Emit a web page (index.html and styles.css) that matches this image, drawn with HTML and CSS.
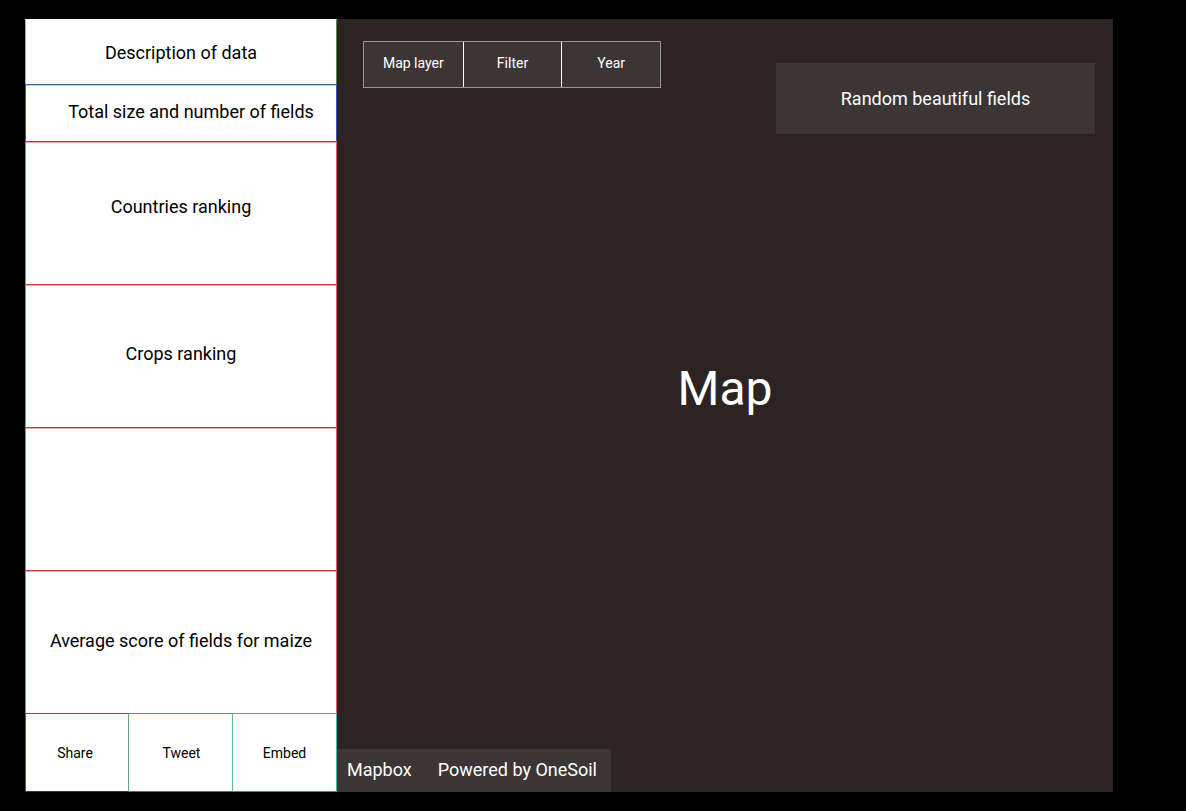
FILE: index.html
```html
<!DOCTYPE html>
<html lang="en">
<head>
<meta charset="utf-8">
<meta name="viewport" content="width=device-width, initial-scale=1">
<title>Map layout</title>
<link rel="stylesheet" href="styles.css">
</head>
<body>
<div class="layout">
  <aside class="sidebar">
    <section class="panel panel-description">Description of data</section>
    <section class="panel panel-totals">Total size and number of fields</section>
    <section class="panel panel-ranking panel-countries">Countries ranking</section>
    <section class="panel panel-ranking">Crops ranking</section>
    <section class="panel panel-ranking"></section>
    <section class="panel panel-ranking panel-score">Average score of fields for maize</section>
    <div class="actions">
      <button class="action action-share" type="button">Share</button>
      <button class="action action-tweet" type="button">Tweet</button>
      <button class="action action-embed" type="button">Embed</button>
    </div>
  </aside>
  <main class="map">
    <h1 class="map-title">Map</h1>
    <div class="map-top">
      <div class="tools">
        <button class="tool" type="button">Map layer</button>
        <button class="tool" type="button">Filter</button>
        <button class="tool" type="button">Year</button>
      </div>
      <button class="random" type="button">Random beautiful fields</button>
    </div>
    <footer class="credits">
      <a class="credit" href="#">Mapbox</a>
      <a class="credit" href="#">Powered by OneSoil</a>
    </footer>
  </main>
</div>
</body>
</html>
```
FILE: styles.css
```css
* {
  box-sizing: border-box;
}

body {
  margin: 0;
  background: #000;
  color: #000;
  font-family: Roboto, "Liberation Sans", sans-serif;
  font-size: 18px;
  line-height: 24px;
}

button {
  font: inherit;
  color: inherit;
  cursor: pointer;
}

.layout {
  display: grid;
  grid-template-columns: 312px 1fr;
  min-height: 100vh;
  padding: 19px 73px 19px 25px;
}

.sidebar {
  display: grid;
  grid-template-rows: 65fr 57fr repeat(4, 143fr) 79fr;
  background: #fff;
}

.panel {
  display: flex;
  align-items: center;
  justify-content: center;
  border: 1px solid;
  border-bottom: 0;
}

.panel-description {
  border-color: #fff #4f8a4c #fff #8fb88d;
  padding-top: 2px;
}

.panel-totals {
  border-color: #2c6ea6 #3f51b5 #fff #3f51b5;
  box-shadow: inset 0 1px #b5d3e8;
  padding-bottom: 2px;
  padding-left: 20px;
}

.panel-ranking {
  border-color: #cc3838 #dc6464 #fff #dc6464;
  box-shadow: inset 0 1px #f2aaaa;
  padding-bottom: 4px;
}

.panel-countries {
  border-top-color: #7b3d98;
  box-shadow: inset 0 1px #e8a0b8;
  padding-bottom: 12px;
}

.panel-score {
  padding-bottom: 2px;
}

.actions {
  display: grid;
  grid-template-columns: 103fr 104fr 105fr;
  font-size: 14px;
}

.action {
  border: 1px solid;
  background: #fff;
  padding: 0 0 0 2px;
}

.action-share {
  border-color: #8338a0 #fff #28367c #3f51b5;
  border-right: 0;
  padding: 0 4px 0 0;
}

.action-tweet {
  border-color: #b5702c #fff #4c7a52 #5fa588;
  border-right: 0;
}

.action-embed {
  border-color: #9c8589 #4cb5ae #3c9490 #58c28c;
  padding: 0;
}

.map {
  position: relative;
  display: flex;
  flex-direction: column;
  justify-content: space-between;
  background: #2d2322;
  color: #fff;
}

.map-title {
  position: absolute;
  inset: 0;
  display: flex;
  align-items: center;
  justify-content: center;
  margin: 0;
  padding-bottom: 34px;
  font-size: 48px;
  font-weight: 400;
  line-height: 56px;
}

.map-top {
  position: relative;
  display: flex;
  align-items: flex-start;
  justify-content: space-between;
  padding: 22px 18px 0 26px;
}

.tools {
  display: grid;
  grid-template-columns: repeat(3, 1fr);
  width: 298px;
  height: 47px;
  border: 1px solid #9a9392;
  font-size: 14px;
}

.tool {
  border: 0;
  background: #3b3635;
  padding: 0 0 4px;
}

.tool + .tool {
  border-left: 1px solid #fff;
}

.random {
  width: 319px;
  height: 71px;
  margin-top: 22px;
  border: 0;
  background: #3b3635;
}

.credits {
  position: relative;
  align-self: flex-start;
  display: flex;
  gap: 26px;
  padding: 9px 14px 10px 10px;
  background: #3b3635;
}

.credit {
  color: inherit;
  text-decoration: none;
}
```
